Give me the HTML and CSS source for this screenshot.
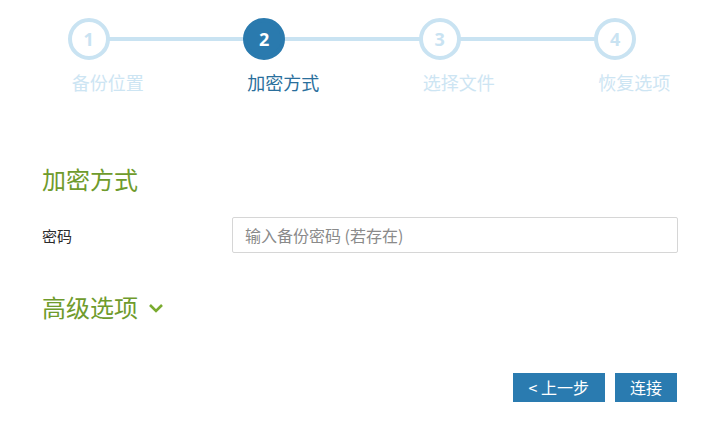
FILE: index.html
```html
<!DOCTYPE html>
<html lang="zh">
<head>
<meta charset="utf-8">
<link rel="stylesheet" href="styles.css">
</head>
<body>
<div class="steps">
  <div class="step done"><div class="circle">1</div><div class="label">备份位置</div></div>
  <div class="step active"><div class="circle">2</div><div class="label">加密方式</div></div>
  <div class="step"><div class="circle">3</div><div class="label">选择文件</div></div>
  <div class="step last"><div class="circle">4</div><div class="label">恢复选项</div></div>
</div>
<div class="content">
  <h2 class="title">加密方式</h2>
  <div class="row">
    <label class="field-label">密码</label>
    <input class="field-input" type="text" placeholder="输入备份密码 (若存在)">
  </div>
  <h2 class="title adv">高级选项
    <svg class="chev" width="16" height="10" viewBox="0 0 16 10"><path d="M2 2 L8 8 L14 2" fill="none" stroke="#7aab2f" stroke-width="2.6"/></svg>
  </h2>
</div>
<div class="actions">
  <button class="btn btn-prev">&lt;&nbsp;上一步</button>
  <button class="btn">连接</button>
</div>
</body>
</html>
```
FILE: styles.css
```css
html, body { margin: 0; padding: 0; background: #fff; }
body { font-family: "Noto Sans CJK SC", "Open Sans", sans-serif; width: 714px; height: 422px; overflow: hidden; }

.steps {
  display: grid;
  grid-template-columns: repeat(4, 175.5px);
  margin-left: 1px;
  padding-top: 18px;
}
.step { position: relative; display: flex; flex-direction: column; align-items: center; }
.step::after {
  content: "";
  position: absolute;
  top: 19px;
  left: 50%;
  width: 100%;
  height: 4px;
  background: #c9e3f2;
  z-index: 0;
}
.step.last::after { display: none; }
.circle {
  position: relative;
  z-index: 1;
  box-sizing: border-box;
  width: 42px; height: 42px;
  border: 4px solid #c9e3f2;
  border-radius: 50%;
  background: #fff;
  color: #c9e3f2;
  display: flex; align-items: center; justify-content: center;
  font-family: "Open Sans", "Liberation Sans", sans-serif;
  font-weight: 700;
  font-size: 18px;
}
.step.active .circle { background: #2a7aae; border-color: #2a7aae; color: #fff; }
.label {
  margin-top: 9px;
  margin-left: 38px;
  font-size: 18px;
  line-height: 26px;
  color: #cde5f3;
}
.step.active .label { color: #2a6f9c; }

.content { padding: 0 36px 0 42px; margin-top: 68px; }
.title {
  margin: 0;
  font-weight: 400;
  font-size: 24px;
  line-height: 32px;
  color: #6f9b2c;
  display: flex; align-items: center;
}
.row { display: flex; align-items: center; margin-top: 22px; }
.field-label { width: 190px; font-size: 15px; color: #2b2b2b; }
.field-input {
  box-sizing: border-box;
  width: 446px; height: 36px;
  border: 1px solid #d6d6d6;
  border-radius: 2px;
  padding: 0 12px;
  font-family: "Noto Sans CJK SC", sans-serif;
  font-size: 16px;
  color: #555;
  outline: none;
}
.field-input::placeholder { color: #8a8a8a; }
.title.adv { margin-top: 38px; }
.chev { margin-left: 10px; margin-top: 2px; }

.actions {
  display: flex;
  justify-content: flex-end;
  gap: 10px;
  padding-right: 37px;
  margin-top: 50px;
}
.btn {
  height: 29px;
  padding: 0 15px;
  border: none;
  border-radius: 0;
  background: #2a7bb0;
  color: #fff;
  font-family: "Noto Sans CJK SC", sans-serif;
  font-size: 16px;
  line-height: 29px;
}
.btn-prev { padding: 0 16px; }
```
